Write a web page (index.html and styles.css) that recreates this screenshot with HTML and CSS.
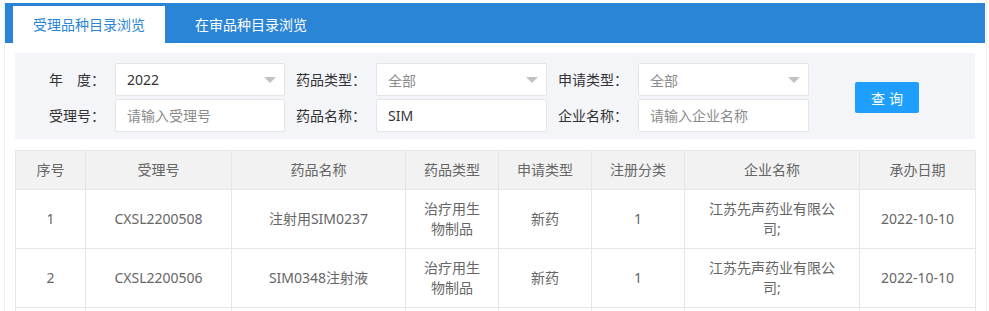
FILE: index.html
```html
<!DOCTYPE html>
<html lang="zh-CN">
<head>
<meta charset="utf-8">
<title>受理品种目录浏览</title>
<link rel="stylesheet" href="styles.css">
</head>
<body>
<div class="page">
  <div class="tabbar">
    <div class="tab active">受理品种目录浏览</div>
    <div class="tab">在审品种目录浏览</div>
  </div>

  <form class="filter">
    <label class="lbl">年　度：</label>
    <div class="field select"><input class="ctl val" type="text" value="2022" readonly></div>
    <label class="lbl">药品类型：</label>
    <div class="field select"><input class="ctl muted" type="text" value="全部" readonly></div>
    <label class="lbl">申请类型：</label>
    <div class="field select"><input class="ctl muted" type="text" value="全部" readonly></div>
    <button class="btn" type="button">查询</button>

    <label class="lbl">受理号：</label>
    <div class="field"><input class="ctl" type="text" placeholder="请输入受理号"></div>
    <label class="lbl">药品名称：</label>
    <div class="field"><input class="ctl val" type="text" value="SIM"></div>
    <label class="lbl">企业名称：</label>
    <div class="field"><input class="ctl" type="text" placeholder="请输入企业名称"></div>
  </form>

  <table class="grid">
    <colgroup>
      <col class="c-no"><col class="c-acc"><col class="c-name"><col class="c-type">
      <col class="c-app"><col class="c-reg"><col class="c-corp"><col class="c-date">
    </colgroup>
    <thead>
      <tr>
        <th>序号</th><th>受理号</th><th>药品名称</th><th>药品类型</th>
        <th>申请类型</th><th>注册分类</th><th>企业名称</th><th>承办日期</th>
      </tr>
    </thead>
    <tbody>
      <tr>
        <td>1</td><td>CXSL2200508</td><td>注射用SIM0237</td><td>治疗用生物制品</td>
        <td>新药</td><td>1</td><td class="corp">江苏先声药业有限公司;</td><td>2022-10-10</td>
      </tr>
      <tr>
        <td>2</td><td>CXSL2200506</td><td>SIM0348注射液</td><td>治疗用生物制品</td>
        <td>新药</td><td>1</td><td class="corp">江苏先声药业有限公司;</td><td>2022-10-10</td>
      </tr>
      <tr>
        <td>&nbsp;</td><td>&nbsp;</td><td>&nbsp;</td><td>&nbsp;</td>
        <td>&nbsp;</td><td>&nbsp;</td><td>&nbsp;</td><td>&nbsp;</td>
      </tr>
    </tbody>
  </table>
</div>
</body>
</html>
```

FILE: styles.css
```css
html, body {
  margin: 0;
  padding: 0;
  background: #fff;
  overflow: hidden;
}

body {
  font-family: "Noto Sans", "Noto Sans CJK SC", "Microsoft YaHei", sans-serif;
  font-size: 14px;
  color: #333;
}

.page {
  margin-left: 4px;
  width: 983px;
  height: 311px;
  box-sizing: border-box;
  border-left: 1px solid #edf0f4;
  border-right: 1px solid #edf0f4;
  padding-top: 3px;
  overflow: hidden;
}

.tabbar {
  height: 40px;
  margin-right: 1px;
  background: #2b85d6;
  display: flex;
  align-items: flex-end;
  gap: 10px;
  padding-left: 8px;
}

.tab {
  height: 37px;
  padding: 0 20px;
  display: flex;
  align-items: center;
  color: #fff;
  font-size: 14px;
  line-height: 20px;
}

.tab.active {
  background: #fff;
  color: #2b85d6;
}

.filter {
  margin: 10px 11px 0 10px;
  background: #f4f5f9;
  padding: 10px 0 7px 34px;
  display: grid;
  grid-template-columns: 56px 170px 71px 171px 71px 171px auto;
  grid-template-rows: 33px 33px;
  column-gap: 10px;
  row-gap: 3px;
  align-items: center;
}

.lbl {
  text-align: right;
  white-space: nowrap;
  color: #333;
  line-height: 20px;
}

.field {
  position: relative;
  height: 33px;
}

.ctl {
  box-sizing: border-box;
  width: 100%;
  height: 33px;
  margin: 0;
  padding: 0 10px 0 11px;
  border: 1px solid #e4e5e7;
  border-radius: 2px;
  background: #fff;
  font-family: inherit;
  font-size: 14px;
  color: #333;
  outline: none;
}

.ctl::placeholder {
  color: #8c8c8c;
}

.ctl.muted {
  color: #8c8c8c;
}

.select::after {
  content: "";
  position: absolute;
  right: 9px;
  top: 14px;
  border-style: solid;
  border-width: 6px 6px 0 6px;
  border-color: #c2c2c2 transparent transparent transparent;
}

.btn {
  grid-column: 7;
  grid-row: 1 / span 2;
  align-self: center;
  margin-left: 36px;
  width: 64px;
  height: 31px;
  border: 0;
  border-radius: 2px;
  background: #1e9fff;
  color: #fff;
  font-family: inherit;
  font-size: 14px;
  letter-spacing: 4px;
  text-indent: 4px;
  padding: 0;
  cursor: pointer;
}

.grid {
  margin: 11px 11px 0 10px;
  width: 960px;
  border-collapse: collapse;
  table-layout: fixed;
}

.c-no { width: 70px; }
.c-acc { width: 146px; }
.c-name { width: 174px; }
.c-type { width: 93px; }
.c-app { width: 93px; }
.c-reg { width: 93px; }
.c-corp { width: 175px; }
.c-date { width: 116px; }

.grid th,
.grid td {
  border: 1px solid #e6e6e6;
  padding: 9px 15px;
  line-height: 20px;
  text-align: center;
  color: #666;
  font-size: 14px;
  font-weight: normal;
}

.grid td.corp {
  padding-left: 17px;
  padding-right: 17px;
}

.grid th {
  background: #f2f2f2;
}

.grid td {
  background: #fff;
}
```
